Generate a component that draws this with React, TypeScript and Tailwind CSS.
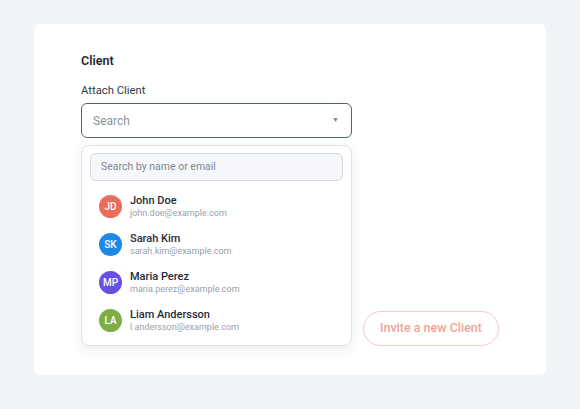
const clients = [
  { initials: 'JD', name: 'John Doe', email: 'john.doe@example.com', color: 'bg-[#e96d5b]' },
  { initials: 'SK', name: 'Sarah Kim', email: 'sarah.kim@example.com', color: 'bg-[#1e88e5]' },
  { initials: 'MP', name: 'Maria Perez', email: 'maria.perez@example.com', color: 'bg-[#6a4fe4]' },
  { initials: 'LA', name: 'Liam Andersson', email: 'l.andersson@example.com', color: 'bg-[#7cae45]' },
]

export default function App() {
  return (
    <div className="min-h-[409px] bg-[#f0f3f7] px-[34px] pt-6 pb-[34px] font-['Roboto',sans-serif]">
      <div className="w-[512px] rounded-md bg-white px-[47px] pt-[28px] pb-[29px]">
        <h2 className="text-[12.5px] font-semibold leading-[18px] text-[#1b2733]">Client</h2>

        <label className="mt-[13px] block text-[11.3px] leading-4 text-[#2d3a48]">Attach Client</label>

        <div className="relative mt-[4px] w-[271px]">
          <div className="flex h-[35px] items-center justify-between rounded-md border-[1.5px] border-[#4f6275] pl-[11px] pr-[12px]">
            <span className="text-[12px] text-[#8a94a0]">Search</span>
            <span className="text-[7px] text-[#7a8592]">▼</span>
          </div>

          {/* dropdown overlay */}
          <div className="absolute left-0 top-[42px] z-10 w-[271px] rounded-lg border border-[#dde2e8] bg-white px-[8px] pt-[7px] pb-[12px] shadow-[0_4px_14px_rgba(30,40,60,0.08)]">
            <div className="flex h-[28px] items-center rounded-md border border-[#d3d9e1] bg-[#f5f7fa] px-[10px]">
              <span className="text-[10.5px] text-[#7d8793]">Search by name or email</span>
            </div>
            <ul className="mt-[8px] flex flex-col gap-[13px] px-[9px] pt-[5px]">
              {clients.map((c) => (
                <li key={c.initials} className="flex items-center gap-[8px]">
                  <span
                    className={`flex h-[23px] w-[23px] shrink-0 items-center justify-center rounded-full text-[10px] font-medium text-white ${c.color}`}
                  >
                    {c.initials}
                  </span>
                  <div className="leading-none">
                    <p className="text-[11px] font-medium leading-[14px] text-[#1f2c3a]">{c.name}</p>
                    <p className="text-[9px] leading-[11px] text-[#97a0ab]">{c.email}</p>
                  </div>
                </li>
              ))}
            </ul>
          </div>
        </div>

        <div className="mt-[173px] flex justify-end">
          <button className="h-[35px] rounded-full border border-[#f7cbc0] px-[16px] text-[12.5px] font-medium text-[#f0a493]">
            Invite a new Client
          </button>
        </div>
      </div>
    </div>
  )
}
